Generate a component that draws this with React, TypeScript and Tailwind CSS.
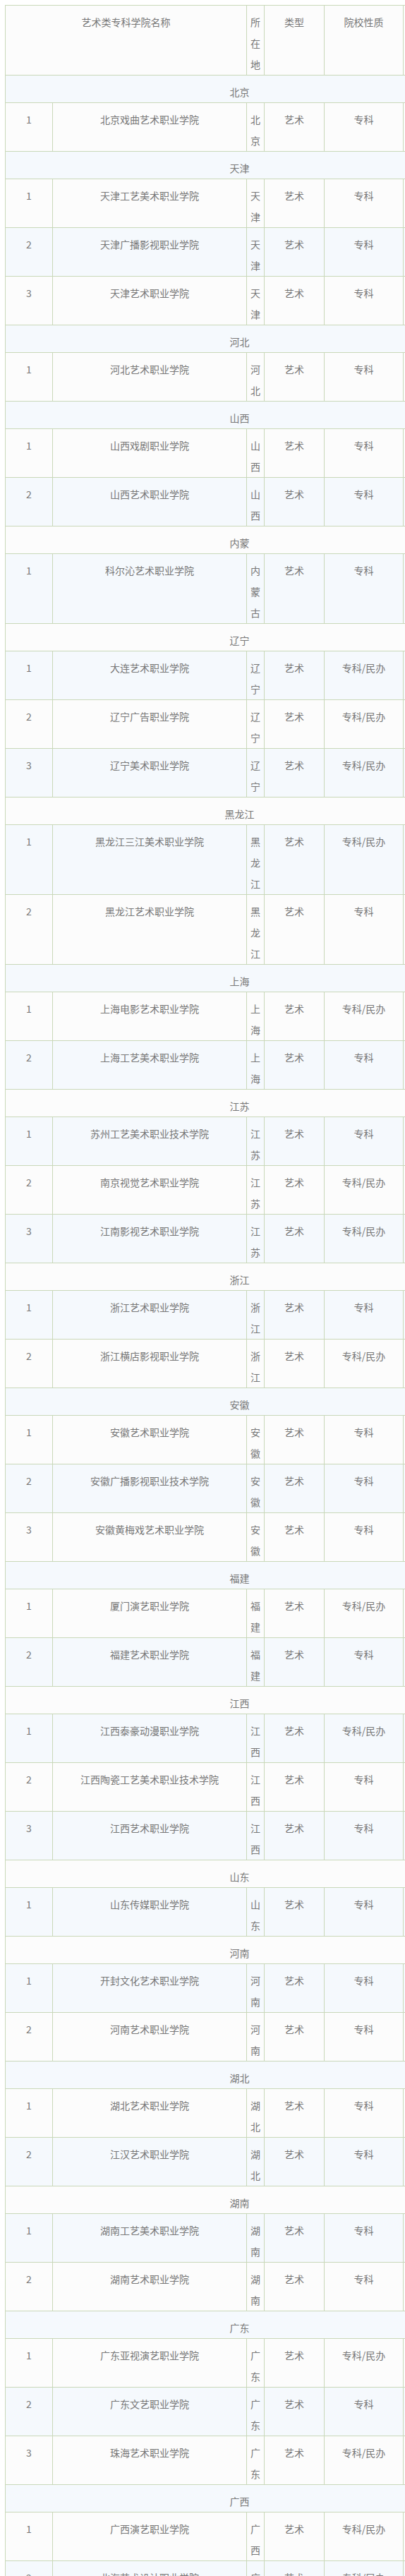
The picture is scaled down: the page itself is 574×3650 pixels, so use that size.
const GROUPS: { region: string; loc: string; schools: [string, string][] }[] = [
  { region: "北京", loc: "北京", schools: [["北京戏曲艺术职业学院", "专科"]] },
  {
    region: "天津",
    loc: "天津",
    schools: [
      ["天津工艺美术职业学院", "专科"],
      ["天津广播影视职业学院", "专科"],
      ["天津艺术职业学院", "专科"],
    ],
  },
  { region: "河北", loc: "河北", schools: [["河北艺术职业学院", "专科"]] },
  {
    region: "山西",
    loc: "山西",
    schools: [
      ["山西戏剧职业学院", "专科"],
      ["山西艺术职业学院", "专科"],
    ],
  },
  { region: "内蒙", loc: "内蒙古", schools: [["科尔沁艺术职业学院", "专科"]] },
  {
    region: "辽宁",
    loc: "辽宁",
    schools: [
      ["大连艺术职业学院", "专科/民办"],
      ["辽宁广告职业学院", "专科/民办"],
      ["辽宁美术职业学院", "专科/民办"],
    ],
  },
  {
    region: "黑龙江",
    loc: "黑龙江",
    schools: [
      ["黑龙江三江美术职业学院", "专科/民办"],
      ["黑龙江艺术职业学院", "专科"],
    ],
  },
  {
    region: "上海",
    loc: "上海",
    schools: [
      ["上海电影艺术职业学院", "专科/民办"],
      ["上海工艺美术职业学院", "专科"],
    ],
  },
  {
    region: "江苏",
    loc: "江苏",
    schools: [
      ["苏州工艺美术职业技术学院", "专科"],
      ["南京视觉艺术职业学院", "专科/民办"],
      ["江南影视艺术职业学院", "专科/民办"],
    ],
  },
  {
    region: "浙江",
    loc: "浙江",
    schools: [
      ["浙江艺术职业学院", "专科"],
      ["浙江横店影视职业学院", "专科/民办"],
    ],
  },
  {
    region: "安徽",
    loc: "安徽",
    schools: [
      ["安徽艺术职业学院", "专科"],
      ["安徽广播影视职业技术学院", "专科"],
      ["安徽黄梅戏艺术职业学院", "专科"],
    ],
  },
  {
    region: "福建",
    loc: "福建",
    schools: [
      ["厦门演艺职业学院", "专科/民办"],
      ["福建艺术职业学院", "专科"],
    ],
  },
  {
    region: "江西",
    loc: "江西",
    schools: [
      ["江西泰豪动漫职业学院", "专科/民办"],
      ["江西陶瓷工艺美术职业技术学院", "专科"],
      ["江西艺术职业学院", "专科"],
    ],
  },
  { region: "山东", loc: "山东", schools: [["山东传媒职业学院", "专科"]] },
  {
    region: "河南",
    loc: "河南",
    schools: [
      ["开封文化艺术职业学院", "专科"],
      ["河南艺术职业学院", "专科"],
    ],
  },
  {
    region: "湖北",
    loc: "湖北",
    schools: [
      ["湖北艺术职业学院", "专科"],
      ["江汉艺术职业学院", "专科"],
    ],
  },
  {
    region: "湖南",
    loc: "湖南",
    schools: [
      ["湖南工艺美术职业学院", "专科"],
      ["湖南艺术职业学院", "专科"],
    ],
  },
  {
    region: "广东",
    loc: "广东",
    schools: [
      ["广东亚视演艺职业学院", "专科/民办"],
      ["广东文艺职业学院", "专科"],
      ["珠海艺术职业学院", "专科/民办"],
    ],
  },
  {
    region: "广西",
    loc: "广西",
    schools: [
      ["广西演艺职业学院", "专科/民办"],
      ["北海艺术设计职业学院", "专科/民办"],
    ],
  },
];

const td = "border border-[#c9d8b9] px-[5px] pt-2 pb-0 align-top text-center";

// 行底色按 tr 的奇偶交替，分组行也算在内
export default function App() {
  let rowNo = 1; // 表头为第 1 行
  const bg = () => (rowNo++ % 2 === 1 ? "bg-[#fcfcfc]" : "bg-[#f5f9fd]");

  return (
    <div
      className="w-full overflow-hidden bg-white pl-[7px] pt-[7px] text-[14px] leading-[30px] text-[#777]"
      style={{ fontFamily: '"Noto Sans CJK SC", "Noto Sans", sans-serif' }}
    >
      <table className="w-[665px] table-fixed border-collapse">
        <colgroup>
          <col className="w-[67px]" />
          <col className="w-[275px]" />
          <col className="w-[25px]" />
          <col className="w-[85px]" />
          <col className="w-[112px]" />
          <col className="w-[100px]" />
        </colgroup>
        <tbody>
          <tr className={bg()}>
            <td colSpan={2} className={td}>
              艺术类专科学院名称
            </td>
            <td className={td}>所在地</td>
            <td className={td}>类型</td>
            <td className={td}>院校性质</td>
            <td className={td}></td>
          </tr>
          {GROUPS.map((g) => [
            <tr key={g.region} className={bg()}>
              <td colSpan={6} className={td}>
                {g.region}
              </td>
            </tr>,
            ...g.schools.map(([name, kind], i) => (
              <tr key={name} className={bg()}>
                <td className={td}>{i + 1}</td>
                <td className={td}>{name}</td>
                <td className={td}>{g.loc}</td>
                <td className={td}>艺术</td>
                <td className={td}>{kind}</td>
                <td className={td}></td>
              </tr>
            )),
          ])}
        </tbody>
      </table>
    </div>
  );
}
